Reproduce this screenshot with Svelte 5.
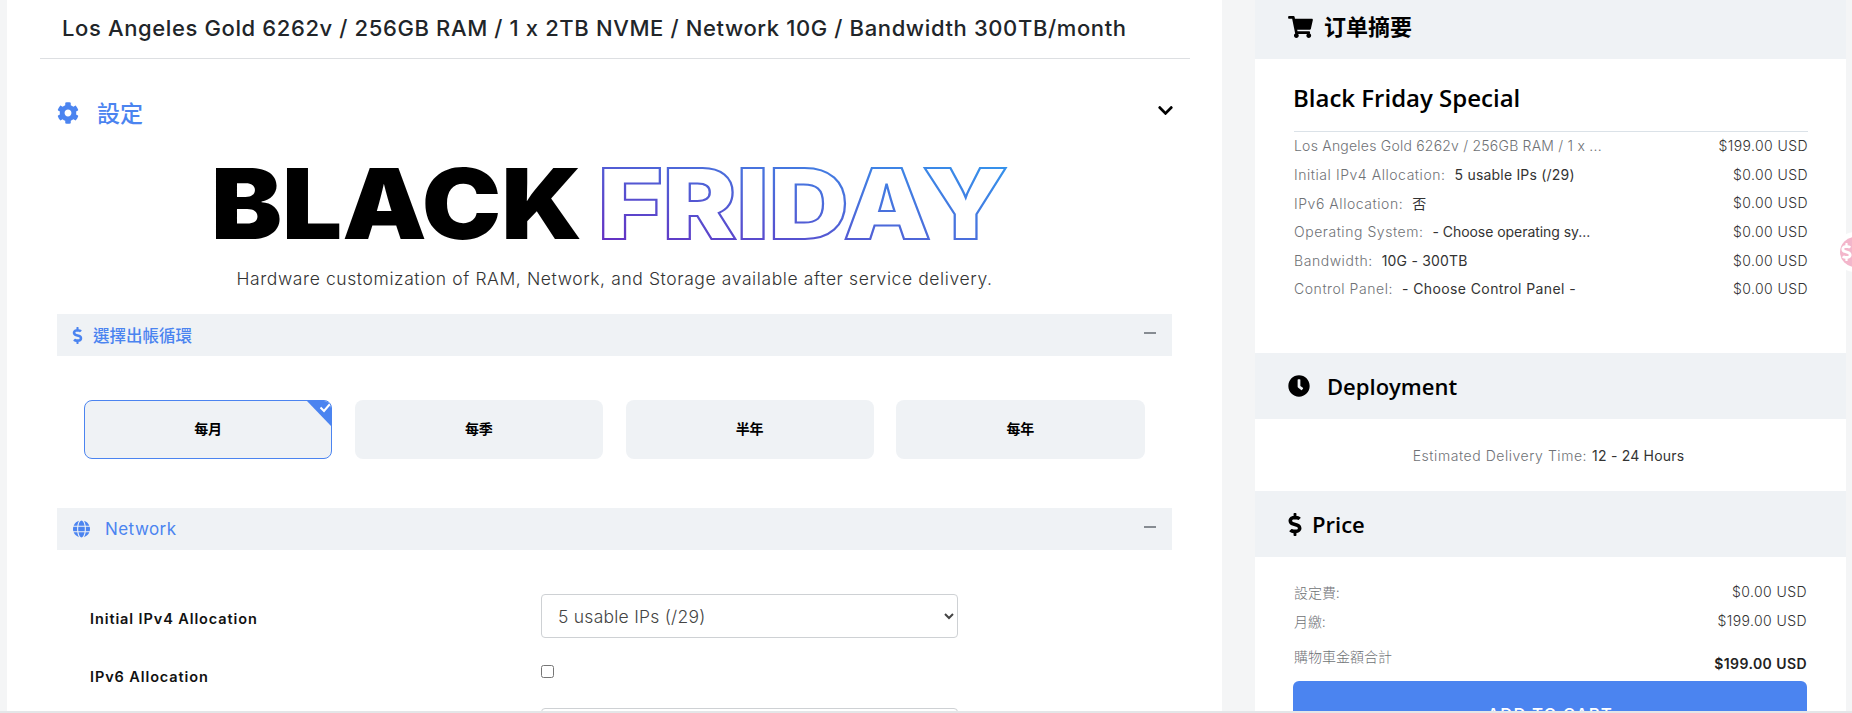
<script>
  const icons = {
    cog: ['0 0 512 512', 'M487.4 315.7l-42.6-24.6c4.3-23.2 4.3-47 0-70.2l42.6-24.6c4.9-2.8 7.1-8.6 5.5-14-11.1-35.6-30-67.8-54.7-94.6-3.8-4.1-10-5.1-14.8-2.3L380.8 110c-17.9-15.4-38.5-27.3-60.8-35.1V25.8c0-5.6-3.9-10.5-9.4-11.7-36.7-8.2-74.3-7.8-109.2 0-5.5 1.2-9.4 6.1-9.4 11.7V75c-22.2 7.9-42.8 19.8-60.8 35.1L88.7 85.5c-4.9-2.8-11-1.9-14.8 2.3-24.7 26.7-43.6 58.9-54.7 94.6-1.7 5.4.6 11.2 5.5 14L67.3 221c-4.3 23.2-4.3 47 0 70.2l-42.6 24.6c-4.9 2.8-7.1 8.6-5.5 14 11.1 35.6 30 67.8 54.7 94.6 3.8 4.1 10 5.1 14.8 2.3l42.6-24.6c17.9 15.4 38.5 27.3 60.8 35.1v49.2c0 5.6 3.9 10.5 9.4 11.7 36.7 8.2 74.3 7.8 109.2 0 5.5-1.2 9.4-6.1 9.4-11.7v-49.2c22.2-7.9 42.8-19.8 60.8-35.1l42.6 24.6c4.9 2.8 11 1.9 14.8-2.3 24.7-26.7 43.6-58.9 54.7-94.6 1.5-5.5-.7-11.3-5.6-14.1zM256 336c-44.1 0-80-35.9-80-80s35.9-80 80-80 80 35.9 80 80-35.9 80-80 80z'],
    chevron: ['0 0 448 512', 'M207.029 381.476L12.686 187.132c-9.373-9.373-9.373-24.569 0-33.941l22.667-22.667c9.357-9.357 24.522-9.375 33.901-.04L224 284.505l154.745-154.021c9.379-9.335 24.544-9.317 33.901.04l22.667 22.667c9.373 9.373 9.373 24.569 0 33.941L240.971 381.476c-9.373 9.372-24.569 9.372-33.942 0z'],
    dollar: ['0 0 288 512', 'M209.2 233.4l-108-31.6C88.7 198.2 80 186.5 80 173.5c0-16.3 13.2-29.5 29.5-29.5h66.3c12.2 0 24.2 3.7 34.2 10.5 6.1 4.1 14.3 3.1 19.5-2l34.8-34c7.1-6.9 6.1-18.4-1.8-24.5C238 74.8 207.4 64.1 176 64V16c0-8.8-7.2-16-16-16h-32c-8.8 0-16 7.2-16 16v48h-2.5C45.8 64-5.4 118.7.5 183.6c4.2 46.1 39.4 83.6 83.8 96.6l102.5 30c12.5 3.7 21.2 15.3 21.2 28.3 0 16.3-13.2 29.5-29.5 29.5h-66.3C100 368 88 364.3 78 357.5c-6.1-4.1-14.3-3.1-19.5 2l-34.8 34c-7.1 6.9-6.1 18.4 1.8 24.5 24.5 19.2 55.1 29.9 86.5 30v48c0 8.8 7.2 16 16 16h32c8.8 0 16-7.2 16-16v-48.2c46.6-.9 90.3-28.6 105.7-72.7 21.5-61.6-14.6-124.8-72.5-141.7z'],
    cart: ['0 0 576 512', 'M528.12 301.319l47.273-208C578.806 78.301 567.391 64 551.99 64H159.208l-9.166-44.81C147.758 8.021 137.93 0 126.529 0H24C10.745 0 0 10.745 0 24v16c0 13.255 10.745 24 24 24h69.883l70.248 343.435C147.325 417.1 136 435.222 136 456c0 30.928 25.072 56 56 56s56-25.072 56-56c0-15.674-6.447-29.835-16.824-40h209.647C430.447 426.165 424 440.326 424 456c0 30.928 25.072 56 56 56s56-25.072 56-56c0-22.172-12.888-41.332-31.579-50.405l5.517-24.276c3.413-15.018-8.002-29.319-23.403-29.319H218.117l-6.545-32h293.145c11.206 0 20.92-7.754 23.403-18.681z'],
    clock: ['0 0 512 512', 'M256,8C119,8,8,119,8,256S119,504,256,504,504,393,504,256,393,8,256,8Zm92.49,313h0l-20,25a16,16,0,0,1-22.49,2.5h0l-67-49.72a40,40,0,0,1-15-31.23V112a16,16,0,0,1,16-16h32a16,16,0,0,1,16,16V256l58,42.5A16,16,0,0,1,348.49,321Z'],
    globe: ['0 0 496 512', 'M336.5 160C322 70.7 287.8 8 248 8s-74 62.7-88.5 152h177zM152 256c0 22.2 1.2 43.5 3.3 64h185.3c2.1-20.5 3.3-41.8 3.3-64s-1.2-43.5-3.3-64H155.3c-2.1 20.5-3.3 41.8-3.3 64zm324.7-96c-28.6-67.9-86.5-120.4-158-141.6 24.4 33.8 41.2 84.7 50 141.6h108zM177.2 18.4C105.8 39.6 47.8 92.1 19.3 160h108c8.7-56.9 25.5-107.8 49.9-141.6zM487.4 192H372.7c2.1 21 3.3 42.5 3.3 64s-1.2 43-3.3 64h114.6c5.5-20.5 8.6-41.8 8.6-64s-3.1-43.5-8.5-64zM120 256c0-21.5 1.2-43 3.3-64H8.6C3.2 212.5 0 233.8 0 256s3.2 43.5 8.6 64h114.6c-2-21-3.2-42.5-3.2-64zm39.5 96c14.5 89.3 48.7 152 88.5 152s74-62.7 88.5-152h-177zm159.3 141.6c71.4-21.2 129.4-73.7 158-141.6h-108c-8.8 56.9-25.6 107.8-50 141.6zM19.3 352c28.6 67.9 86.5 120.4 158 141.6-24.4-33.8-41.2-84.7-50-141.6h-108z']
  };
  const cycles = ['每月', '每季', '半年', '每年'];
  const summary = [
    ['Los Angeles Gold 6262v / 256GB RAM / 1 x ...', '', '$199.00 USD', 'first-k'],
    ['Initial IPv4 Allocation:', '5 usable IPs (/29)', '$0.00 USD', ''],
    ['IPv6 Allocation:', '否', '$0.00 USD', ''],
    ['Operating System:', '- Choose operating sy...', '$0.00 USD', 'narrow-v'],
    ['Bandwidth:', '10G - 300TB', '$0.00 USD', ''],
    ['Control Panel:', '- Choose Control Panel -', '$0.00 USD', 'wide-v']
  ];
</script>

{#snippet icon(name, cls)}
  <svg class={cls} viewBox={icons[name][0]} aria-hidden="true"><path d={icons[name][1]} fill="currentColor" /></svg>
{/snippet}

<div class="page">
  <main class="main">
    <h1 class="title">Los Angeles Gold 6262v / 256GB RAM / 1 x 2TB NVME / Network 10G / Bandwidth 300TB/month</h1>
    <div class="content">
      <div class="settings">
        {@render icon('cog', 'ic-cog')}
        <span class="settings-label">設定</span>
        {@render icon('chevron', 'ic-chevron')}
      </div>
      <svg class="banner" viewBox="0 0 795 80" role="img" aria-label="BLACK FRIDAY">
        <defs>
          <linearGradient id="fr" x1="0" y1="1" x2="1" y2="0">
            <stop offset="0" stop-color="#6a22bd" />
            <stop offset="0.55" stop-color="#4a6fdc" />
            <stop offset="1" stop-color="#2f9cf0" />
          </linearGradient>
        </defs>
        <text class="bf-black" x="-6" y="76" textLength="371" lengthAdjust="spacingAndGlyphs">BLACK</text>
        <text class="bf-outline" x="381" y="76" textLength="410" lengthAdjust="spacingAndGlyphs" stroke="url(#fr)">FRIDAY</text>
      </svg>
      <p class="tagline">Hardware customization of RAM, Network, and Storage available after service delivery.</p>

      <div class="bar">
        {@render icon('dollar', 'ic-bar-dollar')}
        <span class="bar-cjk">選擇出帳循環</span>
        <span class="minus"></span>
      </div>
      <div class="cycles">
        {#each cycles as c, i}
          <button class="cycle" class:active={i === 0}>
            {c}
            {#if i === 0}
              <svg class="tick" viewBox="0 0 26 27" aria-hidden="true">
                <path d="M0 0H26V27Z" fill="#4b84f0" />
                <path d="M14.5 7.5L18 11L24 4" fill="none" stroke="#fff" stroke-width="2" />
              </svg>
            {/if}
          </button>
        {/each}
      </div>

      <div class="bar">
        {@render icon('globe', 'ic-globe')}
        <span class="bar-net">Network</span>
        <span class="minus"></span>
      </div>
      <div class="form">
        <div class="field first">
          <span class="label">Initial IPv4 Allocation</span>
          <select class="select"><option>5 usable IPs (/29)</option></select>
        </div>
        <div class="field second">
          <span class="label">IPv6 Allocation</span>
          <input class="check" type="checkbox" />
        </div>
        <div class="field third">
          <span class="label"></span>
          <select class="select"><option>- Choose -</option></select>
        </div>
      </div>
    </div>
  </main>

  <aside class="side">
    <header class="side-head h-order">
      {@render icon('cart', 'ic-cart')}
      <span class="order-title">订单摘要</span>
    </header>
    <section class="side-body b-order">
      <h2 class="special">Black Friday Special</h2>
      <div class="rows">
        {#each summary as [k, v, p, cls]}
          <div class="row {cls}">
            <span class="row-left"><span class="k">{k}</span>{#if v}<span class="v">{v}</span>{/if}</span>
            <span class="p">{p}</span>
          </div>
        {/each}
      </div>
    </section>
    <header class="side-head h-mid">
      {@render icon('clock', 'ic-clock')}
      <span class="side-title">Deployment</span>
    </header>
    <section class="side-body b-deploy">
      <span class="k">Estimated Delivery Time:</span><span class="v tight">12 - 24 Hours</span>
    </section>
    <header class="side-head h-mid">
      {@render icon('dollar', 'ic-price')}
      <span class="side-title price-title">Price</span>
    </header>
    <section class="side-body b-price">
      <div class="row"><span class="k cjk">設定費:</span><span class="p">$0.00 USD</span></div>
      <div class="row"><span class="k cjk">月繳:</span><span class="p">$199.00 USD</span></div>
      <div class="row total"><span class="k cjk">購物車金額合計</span><span class="p strong">$199.00 USD</span></div>
      <button class="cta">ADD TO CART</button>
    </section>
  </aside>

  <div class="float">{@render icon('dollar', 'ic-float')}</div>
  <div class="bottom-line"></div>
</div>

<style>
  :global(body) { margin: 0; background: #f4f5f6; overflow: hidden; }
  .page {
    position: relative;
    width: 1852px; height: 713px; overflow: hidden;
    display: grid; grid-template-columns: 1215px 591px; column-gap: 33px;
    padding-left: 7px; box-sizing: border-box;
    background: #f4f5f6;
    font-family: Inter, "Noto Sans CJK TC", sans-serif;
  }
  .main { background: #fff; height: 713px; overflow: hidden; padding: 0 32px 0 33px; box-sizing: border-box; }
  .title {
    margin: 0; height: 58px; line-height: 56px; padding-left: 22px;
    border-bottom: 1px solid #dddfe2; box-sizing: content-box;
    font-size: 22px; font-weight: 500; color: #212529; letter-spacing: 0.62px; white-space: nowrap;
  }
  .content { padding: 0 18px 0 17px; }
  .settings { display: flex; align-items: center; height: 24px; margin-top: 42px; color: #4b84f0; }
  .ic-cog { width: 22px; height: 24px; }
  .settings-label { margin-left: 18px; font-size: 23px; line-height: 24px; font-weight: 500; font-family: "Noto Sans CJK TC", sans-serif; position: relative; top: -1px; }
  .ic-chevron { width: 15px; height: 17px; margin-left: auto; margin-right: -1px; color: #000; position: relative; top: -3px; }
  .banner { display: block; width: 795px; height: 80px; margin: 38px 0 0 160px; overflow: visible; }
  .bf-black { font: 900 98px Inter, sans-serif; fill: #000; }
  .bf-outline { font: 900 98px Inter, sans-serif; fill: #fff; stroke-width: 2px; }
  .tagline {
    margin: 23px 0 0; text-align: center; font-size: 17.5px; line-height: 26px;
    font-weight: 300; color: #333; letter-spacing: 0.6px; height: 25px;
  }
  .bar {
    display: flex; align-items: center; height: 42px; margin-top: 23px; background: #eff2f5;
    color: #4b84f0; position: relative;
  }
  .ic-bar-dollar { width: 11px; height: 17px; margin-left: 15px; }
  .bar-cjk { margin-left: 10px; font-size: 16.5px; font-family: "Noto Sans CJK TC", sans-serif; font-weight: 500; }
  .ic-globe { width: 17px; height: 18px; margin-left: 16px; }
  .bar-net { margin-left: 15px; font-size: 17px; letter-spacing: 0.45px; }
  .minus { position: absolute; right: 16px; top: 18px; width: 12px; height: 2px; background: #868c92; }
  .cycles {
    display: grid; grid-template-columns: repeat(4, 1fr); gap: 22.5px;
    padding: 44px 27.5px 0 27px; height: 59px;
  }
  .cycle {
    position: relative; overflow: hidden; height: 59px; border: 0; border-radius: 8px; background: #eff2f5;
    font: 700 14px "Noto Sans CJK TC", sans-serif; color: #000; padding: 0 0 4px; box-sizing: border-box;
  }
  .cycle.active { border: 1px solid #4b84f0; }
  .tick { position: absolute; top: -1px; right: -1px; width: 26px; height: 27px; }
  .cycles + .bar { margin-top: 49px; }
  .form { padding: 44px 0 0 33px; }
  .field { display: grid; grid-template-columns: 451px 417px; }
  .label { font-size: 14.5px; font-weight: 600; color: #111; letter-spacing: 0.9px; }
  .first { height: 44px; align-items: center; }
  .first .label { padding-top: 4px; }
  .second { margin-top: 27px; height: 16px; }
  .second .label { line-height: 20px; margin-top: 2px; }
  .third { margin-top: 27px; }
  .select {
    width: 417px; height: 44px; box-sizing: border-box; background: #fff; border: 1px solid #ced1d4; border-radius: 4px;
    padding: 0 12px; font: 300 17.5px Inter, sans-serif; color: #444; letter-spacing: 0.25px;
  }
  .check { margin: 0; width: 13px; height: 13px; }
  .side { display: flex; flex-direction: column; height: 713px; overflow: hidden; }
  .side > * { flex-shrink: 0; }
  .side-head { background: #eff2f5; display: flex; align-items: center; padding-left: 33px; color: #000; }
  .h-order { height: 59px; padding-bottom: 5px; box-sizing: border-box; }
  .h-mid { height: 66px; box-sizing: border-box; }
  .ic-cart { width: 25px; height: 22px; }
  .order-title { margin-left: 11px; font: 600 22px "Noto Sans CJK SC", sans-serif; position: relative; top: -2px; }
  .side-body { background: #fff; box-sizing: border-box; font-size: 14px; }
  .b-order { height: 294px; padding: 0 38px 0 39px; }
  .special { margin: 0 0 0 -1px; padding-top: 22px; height: 50px; box-sizing: content-box; font: 600 24px/34px "Open Sans", sans-serif; color: #000; }
  .rows { border-top: 1px solid #dbe2e8; margin-top: 0; }
  .row { display: flex; justify-content: space-between; align-items: center; height: 28.6px; position: relative; top: -0.6px; }
  .k { font-weight: 300; color: #6f7276; letter-spacing: 0.55px; white-space: nowrap; }
  .first-k .k { letter-spacing: 0.22px; }
  .v { margin-left: 9px; color: #333; font-weight: 400; letter-spacing: 0.2px; white-space: nowrap; }
  .narrow-v .v { letter-spacing: -0.05px; }
  .wide-v .v { letter-spacing: 0.4px; }
  .p { font-weight: 300; color: #333; letter-spacing: 0.42px; white-space: nowrap; }
  .ic-clock { width: 22px; height: 22px; }
  .side-title { margin-left: 17px; font: 600 22px "Open Sans", sans-serif; color: #000; }
  .b-deploy { height: 72px; display: flex; align-items: center; justify-content: center; padding-right: 4px; }
  .tight { margin-left: 5px; }
  .ic-price { width: 14px; height: 23px; }
  .price-title { margin-left: 10px; }
  .b-price { flex: 1; padding: 20px 39px 0; }
  .b-price .row { height: 29px; top: 0; }
  .cjk { font-family: "Noto Sans CJK TC", sans-serif; font-weight: 300; letter-spacing: 0; }
  .total { align-items: flex-start; height: 33px !important; margin-top: 10px; }
  .total .k { line-height: 22px; }
  .strong { font-weight: 600; color: #222; line-height: 22px; padding-top: 8px; }
  .cta {
    display: block; width: 514px; height: 68px; margin: 3px 0 0 -1px; border: 0; border-radius: 6px; background: #4b84f0; color: #fff;
    font: 500 17px Inter, sans-serif; letter-spacing: 0.9px; padding: 0;
  }
  .float {
    position: absolute; left: 1840px; top: 237px; width: 30px; height: 30px; border-radius: 50%;
    background: #f3b6cb; box-shadow: 0 0 0 5px #fff; color: #fff; display: flex; align-items: center;
  }
  .ic-float { width: 11px; height: 18px; margin-left: 1px; }
  .bottom-line { position: absolute; left: 0; right: 0; bottom: 0; height: 2px; background: #e4e6e8; }
</style>
